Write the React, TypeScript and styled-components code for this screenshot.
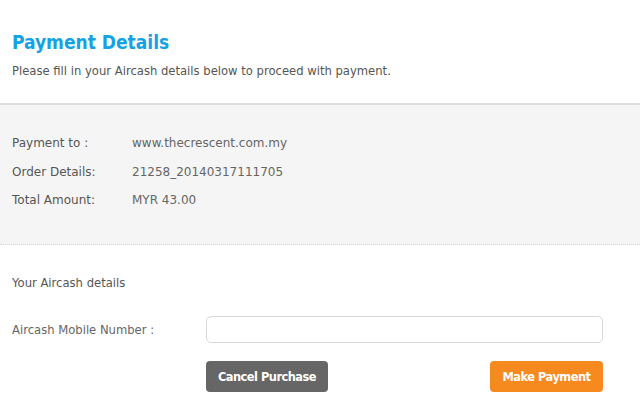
import React from "react";
import styled, { createGlobalStyle } from "styled-components";

const GlobalStyle = createGlobalStyle`
  html, body {
    margin: 0;
    padding: 0;
    background: #ffffff;
  }
  body {
    font-family: "DejaVu Sans", Verdana, sans-serif;
    color: #555555;
  }
`;

const Page = styled.div`
  width: 640px;
  height: 413px;
  overflow: hidden;
  background: #ffffff;
`;

const Header = styled.div`
  padding: 30px 12px 0 12px;
  height: 73px;
  box-sizing: border-box;
`;

const Title = styled.h1`
  margin: 0;
  font-family: "DejaVu Sans Condensed", "DejaVu Sans", sans-serif;
  font-size: 19px;
  line-height: 24px;
  font-weight: bold;
  color: #12a2e6;
`;

const Subtitle = styled.p`
  margin: 10px 0 0 0;
  font-size: 11.6px;
  line-height: 14px;
  color: #555555;
`;

const Summary = styled.div`
  margin-top: 30px;
  height: 142px;
  box-sizing: border-box;
  background: #f5f5f5;
  border-top: 2px solid #dddddd;
  border-bottom: 1px dotted #d6d6d6;
  padding: 31px 12px 0 12px;
  display: flex;
  flex-direction: column;
  gap: 14px;
`;

const Row = styled.div`
  display: flex;
  font-size: 12px;
  line-height: 14.5px;
`;

const Label = styled.span`
  width: 120px;
  color: #555555;
`;

const Value = styled.span`
  color: #666666;
`;

const Details = styled.div`
  padding: 31px 12px 0 12px;
`;

const SectionTitle = styled.div`
  font-size: 11.6px;
  line-height: 14px;
  color: #555555;
`;

const FieldRow = styled.div`
  margin-top: 26px;
  display: flex;
  align-items: center;
`;

const FieldLabel = styled.label`
  width: 194px;
  font-size: 11.6px;
  color: #666666;
`;

const Input = styled.input`
  width: 397px;
  height: 27px;
  box-sizing: border-box;
  border: 1px solid #d8d8d8;
  border-radius: 5px;
  background: #ffffff;
  outline: none;
`;

const Actions = styled.div`
  margin: 18px 0 0 194px;
  width: 397px;
  display: flex;
  justify-content: space-between;
`;

const Button = styled.button<{ $variant: "cancel" | "pay" }>`
  height: 31px;
  padding: 0;
  width: ${(p) => (p.$variant === "cancel" ? "122px" : "113px")};
  border: none;
  border-radius: 4px;
  background: ${(p) => (p.$variant === "cancel" ? "#666666" : "#f68a1f")};
  color: #ffffff;
  font-family: "DejaVu Sans", Verdana, sans-serif;
  font-weight: bold;
  font-size: 11.4px;
  letter-spacing: -0.5px;
  cursor: pointer;
`;

const rows = [
  { label: "Payment to :", value: "www.thecrescent.com.my" },
  { label: "Order Details:", value: "21258_20140317111705" },
  { label: "Total Amount:", value: "MYR 43.00" },
];

export default function App() {
  return (
    <Page>
      <GlobalStyle />
      <Header>
        <Title>Payment Details</Title>
        <Subtitle>Please fill in your Aircash details below to proceed with payment.</Subtitle>
      </Header>
      <Summary>
        {rows.map((r) => (
          <Row key={r.label}>
            <Label>{r.label}</Label>
            <Value>{r.value}</Value>
          </Row>
        ))}
      </Summary>
      <Details>
        <SectionTitle>Your Aircash details</SectionTitle>
        <FieldRow>
          <FieldLabel>Aircash Mobile Number :</FieldLabel>
          <Input type="text" />
        </FieldRow>
        <Actions>
          <Button $variant="cancel">Cancel Purchase</Button>
          <Button $variant="pay">Make Payment</Button>
        </Actions>
      </Details>
    </Page>
  );
}
